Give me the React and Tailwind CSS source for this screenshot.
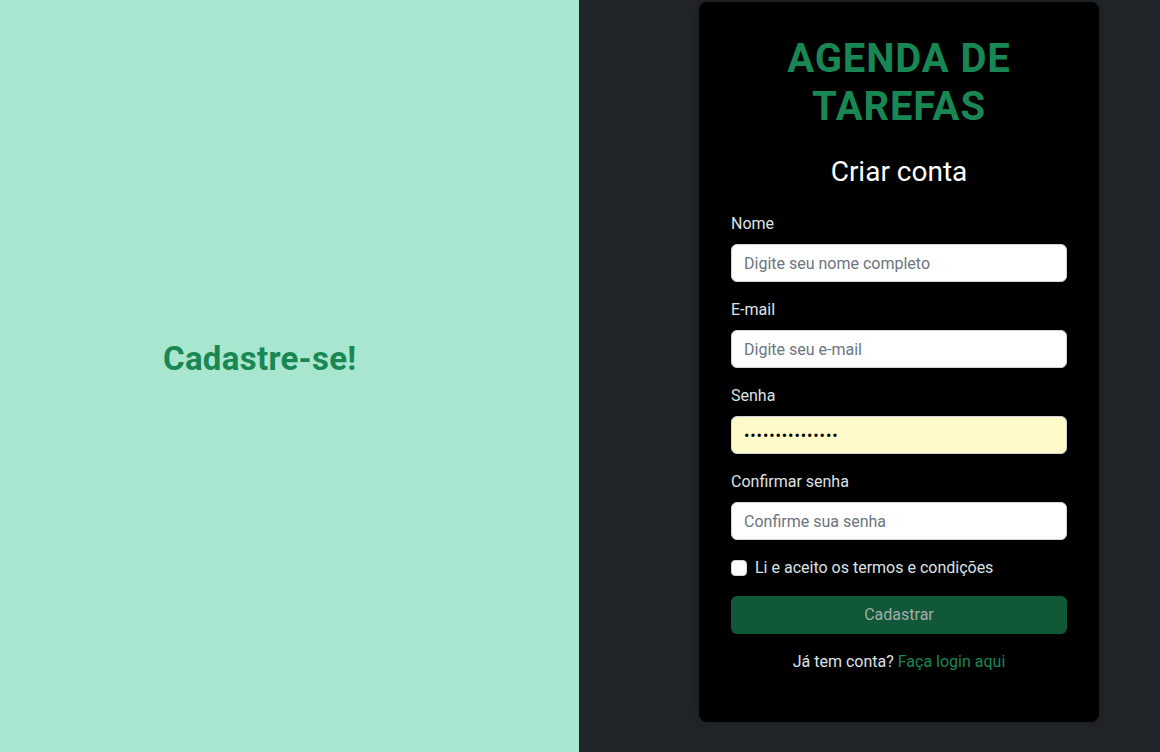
import React from "react";

function Field({ label, children }) {
  return (
    <div className="mb-4">
      <label className="block mb-2 text-[16px] leading-[24px] text-[#dee2e6]">{label}</label>
      {children}
    </div>
  );
}

const inputCls =
  "block w-full h-[38px] px-3 rounded-[6px] border border-[#ced4da] bg-white text-[16px] text-[#212529] placeholder:text-[#6c757d] outline-none";

export default function App() {
  return (
    <div
      className="flex w-[1160px] h-[752px] overflow-hidden"
      style={{ fontFamily: "Roboto, 'Noto Sans', sans-serif" }}
    >
      <div className="w-[579px] h-full bg-[#a8e6cf] flex items-center pl-[163px] pb-[34px]">
        <h2 className="text-[33px] leading-[40px] tracking-[0.3px] font-bold text-[#198754]">Cadastre-se!</h2>
      </div>
      <div className="flex-1 h-full bg-[#212529] pl-[120px] pt-[2px]">
        <div className="w-[400px] bg-black rounded-[8px] px-8 pt-[33px] pb-8 shadow-[0_0_8px_rgba(0,0,0,0.3)]">
          <h1 className="text-center text-[40px] leading-[48px] tracking-[0.9px] font-bold text-[#198754] mb-6">
            AGENDA DE
            <br />
            TAREFAS
          </h1>
          <h3 className="text-center text-[28px] leading-[34px] text-white mb-[23px]">Criar conta</h3>
          <Field label="Nome">
            <input className={inputCls} placeholder="Digite seu nome completo" />
          </Field>
          <Field label="E-mail">
            <input className={inputCls} placeholder="Digite seu e-mail" />
          </Field>
          <Field label="Senha">
            <input
              type="password"
              readOnly
              value="123456789012345"
              className="block w-full h-[38px] px-3 rounded-[6px] border border-[#ced4da] bg-[#fefbc9] text-[16px] tracking-[0.9px] text-black outline-none"
            />
          </Field>
          <Field label="Confirmar senha">
            <input className={inputCls} placeholder="Confirme sua senha" />
          </Field>
          <div className="flex items-center h-6 mb-4">
            <span className="w-4 h-4 bg-white rounded-[4px] border border-[#ced4da]" />
            <span className="ml-2 text-[16px] text-[#dee2e6]">Li e aceito os termos e condições</span>
          </div>
          <button className="w-full h-[38px] rounded-[6px] bg-[#105837] text-[16px] text-[#a3aea8]">
            Cadastrar
          </button>
          <p className="mt-4 mb-4 text-center text-[16px] leading-[24px] text-[#dee2e6]">
            Já tem conta? <span className="text-[#198754]">Faça login aqui</span>
          </p>
        </div>
      </div>
    </div>
  );
}
